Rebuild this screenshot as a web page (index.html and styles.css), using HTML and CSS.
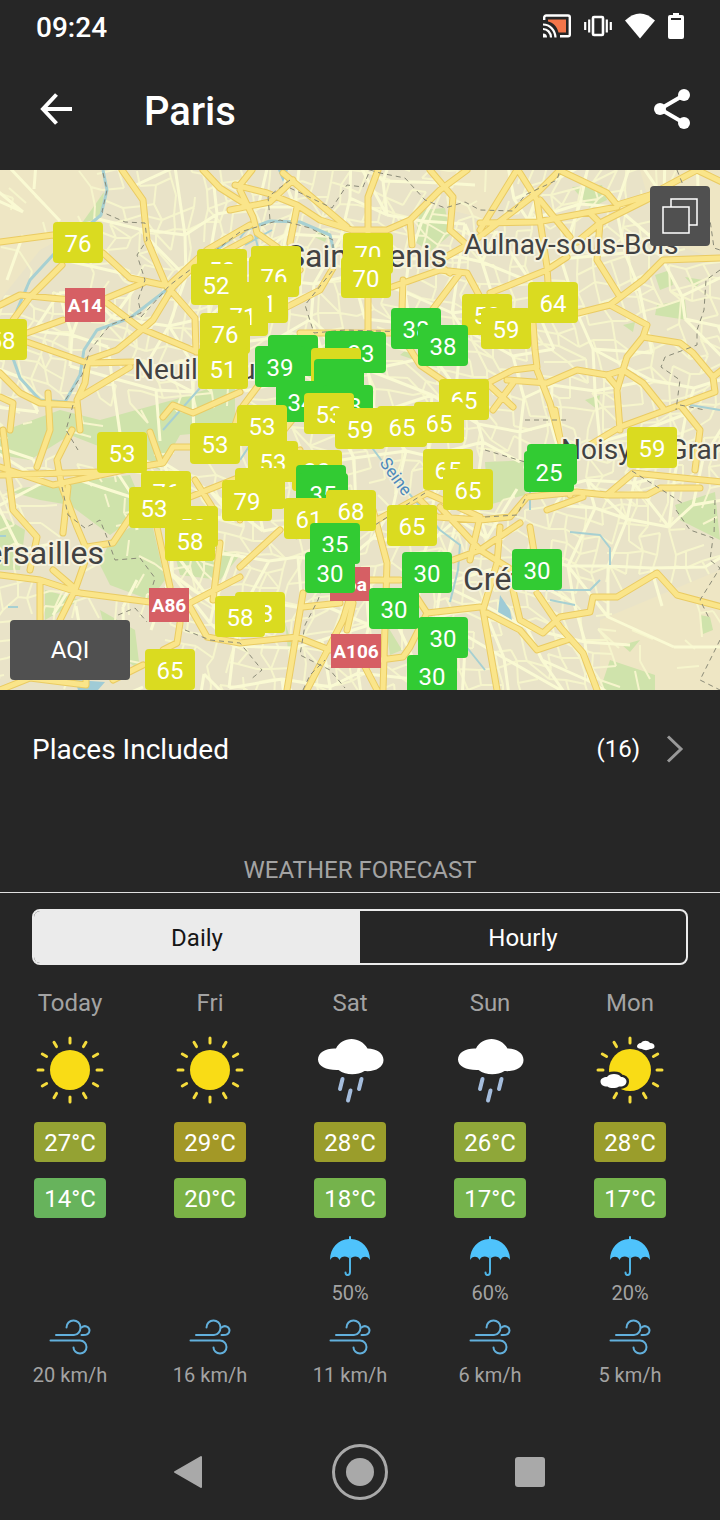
FILE: index.html
```html
<!DOCTYPE html>
<html lang="en">
<head>
<meta charset="utf-8">
<meta name="viewport" content="width=device-width, initial-scale=1">
<title>Paris</title>
<link rel="stylesheet" href="styles.css">
</head>
<body>
<svg width="0" height="0" class="sprites" aria-hidden="true">
  <defs>
    <g id="rays" stroke="#f5dc3c" stroke-width="3" stroke-linecap="round">
      <path id="ray" d="M40 8v5"/>
      <use href="#ray" transform="rotate(30 40 40)"/><use href="#ray" transform="rotate(60 40 40)"/><use href="#ray" transform="rotate(90 40 40)"/><use href="#ray" transform="rotate(120 40 40)"/><use href="#ray" transform="rotate(150 40 40)"/><use href="#ray" transform="rotate(180 40 40)"/><use href="#ray" transform="rotate(210 40 40)"/><use href="#ray" transform="rotate(240 40 40)"/><use href="#ray" transform="rotate(270 40 40)"/><use href="#ray" transform="rotate(300 40 40)"/><use href="#ray" transform="rotate(330 40 40)"/>
    </g>
    <symbol id="sun" viewBox="0 0 80 80"><use href="#rays"/><circle cx="40" cy="40" r="20" fill="#f9dc16"/></symbol>
    <symbol id="rain" viewBox="0 0 80 80">
      <path fill="#fff" d="M26 18.500C29 12.500 35 9 41.500 9S54 12.500 57.500 18.500C67 18.500 73.500 23.500 73.500 30C73.500 37.500 65 42 54.500 41C47 45.500 36 45.500 28.500 40C17 40.500 8 36.500 8 29.500C8 22.500 16 18 26 18.500Z"/>
      <path stroke="#a5bddd" stroke-width="4" stroke-linecap="round" d="M32.500 49l-2.500 10M51.500 49l-2.500 10M40.500 60.500l-2.500 10"/>
    </symbol>
    <symbol id="partly" viewBox="0 0 80 80">
      <g stroke="#f5dc3c" stroke-width="3" stroke-linecap="round"><use href="#ray"/><use href="#ray" transform="rotate(60 40 40)"/><use href="#ray" transform="rotate(90 40 40)"/><use href="#ray" transform="rotate(120 40 40)"/><use href="#ray" transform="rotate(150 40 40)"/><use href="#ray" transform="rotate(180 40 40)"/><use href="#ray" transform="rotate(210 40 40)"/><use href="#ray" transform="rotate(270 40 40)"/><use href="#ray" transform="rotate(300 40 40)"/><use href="#ray" transform="rotate(330 40 40)"/></g>
      <circle cx="40" cy="40" r="21" fill="#f9dc16"/>
      <path fill="#fff" stroke="#262626" stroke-width="5" paint-order="stroke" d="M17 47C19 43 29 43 31 47C34 47 36.500 49 36.500 51.500C36.500 55 33 57 29 56.500C26 58.500 20 58.500 17.500 56.500C13 56.500 10.500 54.500 10.500 51.500S13.500 47 17 47Z"/>
      <path fill="#fff" d="M51 13C53 10 58 10 60 13C63 13 64.500 14.500 64.500 16.500S62 19 60 19C58 20.500 54 20.500 52 19C49 19 47 18 47 16.500S48.500 13 51 13Z"/>
    </symbol>
    <symbol id="umbrella" viewBox="0 0 40 40">
      <path fill="#4fc3fc" d="M19 3V1a1 1 0 0 1 2 0v2C32 3.500 40 12 40 24C38 19.500 32 19.500 30.500 24C29 19.500 22.500 19.500 20 23C17.500 19.500 11 19.500 9.500 24C8 19.500 2 19.500 0 24C0 12 8 3.500 19 3Z"/>
      <path fill="none" stroke="#4fb4e6" stroke-width="2" stroke-linecap="round" d="M20 21v15c0 4-4.500 4-4.500 0.500"/>
    </symbol>
    <symbol id="wind" viewBox="0 0 42 38">
      <g fill="none" stroke="#62b0dc" stroke-width="2" stroke-linecap="round"><path d="M7 17H25C29 17 31.500 13 31.500 9.500C31.500 5 28 2.500 24.500 2.500C20.500 2.500 17.500 5.500 17.500 9.500"/><path d="M32.500 9.500C36 6.500 40.500 9 40.500 12.500C40.500 15.500 38 17.500 32.500 17"/><path d="M1.500 22.500H31C35 22.500 37.500 26 37.500 29C37.500 33 34.500 35.500 31 35.500C27.500 35.500 24.500 33 24.500 29.500"/></g>
    </symbol>
  </defs>
</svg>

<div class="app">
  <div class="status">
    <span class="clock">09:24</span>
    <div class="status-icons">
      <svg width="28" height="24" viewBox="0 0 28 24"><path fill="none" stroke="#fff" stroke-width="2.400" d="M1.200 6V3.500a2 2 0 0 1 2-2H25a1.800 1.800 0 0 1 1.800 1.800V20.500a1.800 1.800 0 0 1-1.800 1.800H17"/><path fill="#f4764a" d="M5 5.500H23V18.500H15.500C14 12 10 8.500 5 7.500Z"/><path fill="none" stroke="#fff" stroke-width="2.200" d="M0 10.500c7 0 12 5.500 12.500 13M0 15c4.500 0 7.800 3.500 8 8.500"/><path fill="#fff" d="M0 19.500q4 0 4 4H0z"/></svg>
      <svg width="28" height="22" viewBox="0 0 28 22"><rect x="9" y="2" width="10" height="18" rx="1" fill="none" stroke="#fff" stroke-width="2.600"/><path stroke="#fff" stroke-width="2.200" d="M1.200 7v8M5.200 4.500v13M22.800 4.500v13M26.800 7v8"/></svg>
      <svg width="30" height="26" viewBox="0 0 30 26"><path fill="#fff" d="M0 7.500Q15-6.500 30 7.500L15 25.500Z"/></svg>
      <svg width="16" height="26" viewBox="0 0 16 26"><path fill="#fff" d="M5 0h6v2h3q2 0 2 2v20q0 2-2 2H2q-2 0-2-2V4q0-2 2-2h3z"/><path fill="#262626" d="M3 5h10v2H3z"/></svg>
    </div>
  </div>

  <header class="bar">
    <button class="icon-btn" aria-label="Back"><svg width="34" height="32" viewBox="0 0 34 32"><path fill="none" stroke="#fff" stroke-width="4" d="M32 16H4M16.500 1.500L3 16l13.500 14.500"/></svg></button>
    <h1>Paris</h1>
    <button class="icon-btn" aria-label="Share"><svg width="36" height="40" viewBox="0 0 36 40"><path fill="none" stroke="#fff" stroke-width="4" d="M30 6L6 20l24 14"/><g fill="#fff"><circle cx="30" cy="6" r="6"/><circle cx="6" cy="20" r="6"/><circle cx="30" cy="34" r="6"/></g></svg></button>
  </header>

  <section class="map" aria-label="Air quality map">
    <svg class="map-canvas" viewBox="0 0 720 520" preserveAspectRatio="xMidYMid slice">
      <defs>
        <path id="roads" d="M0 72L53 65L103 83L130 108L163 115M122 0L143 30L147 70L166 115L195 148L196 182M250 55L207 80L167 117M250 68L190 100L173 117L153 150L133 167L117 180L88 190L85 213L77 230L80 260M0 135L20 125L50 128L107 133L140 158L197 182M62 95L30 127L13 150M27 163L63 150M107 128L143 113M27 172L87 193L133 192M80 227L130 197M0 203L20 223L40 233L73 235M48 223L50 260L37 297M0 227L13 233L10 260M163 247L173 235L193 243L240 222M203 0L220 18L250 37M235 15L267 23L297 35L320 50L352 60L387 60L410 50L440 20L467 0M283 3L347 57M378 0L368 27L368 163M230 40L270 32L293 10M240 20L253 47L257 63L277 77L300 100M240 15L252 0M297 37L290 73M410 50L412 75M430 0L453 27L450 60L467 75L440 90M392 117L440 100L467 103L480 127M403 110L402 140M460 103L427 147M430 90L450 103M287 137L320 120L333 98M300 163H400L420 195L445 212M517 0L480 60M560 0L537 23L478 68M518 0L537 30L547 97L548 113M563 2L607 23L617 35L650 25L697 0L722 12M480 53L537 52L617 37M650 28L600 53L597 90L620 127M540 30L570 67M590 43L600 53L577 72M578 143L610 135L643 110L663 90L720 88M490 123L547 100L567 87M610 135L647 155L643 167L627 187L623 200L617 220L620 260M643 167L680 173L693 183L713 207L715 222L680 235L620 257L590 275M480 217L513 200L537 197L535 180L533 153M537 200L550 233L560 270M507 210L547 213L577 200L607 205L623 200L643 213L663 238M607 205L617 217M487 213L513 237M513 213L493 240M713 207L722 200M680 235L700 260L695 300M0 297L53 315L133 298L163 293L173 277L200 277M0 305L100 302M72 260L57 290L62 317L77 357L88 383L75 420L60 450M3 260L13 340L37 367L30 400M68 317L63 363M0 405L40 410L80 423L150 432M40 413L40 450M53 400L73 417M150 262L160 290M157 357L170 417M87 377L113 373L133 343M190 433L240 407M190 437L207 467L240 473L297 467L330 480M180 453L177 473L163 480L165 520M213 430L220 373M113 510L143 495M190 327L240 307L300 280M0 520L30 508L86 515V470M195 310L214 340M240 397L280 360M303 423L287 520M350 427L343 450L307 520M303 437L340 433M353 433L347 460M373 340L387 393L383 520M377 350L427 323L480 347M420 330L437 347L480 350L510 347L527 327L577 322L607 325L633 303L722 312M370 410H400M380 490L403 487L410 477L427 443L480 437M410 417L427 443M363 493L377 520M440 337L480 380L512 400M453 390L480 380L520 353M607 325L647 325L660 318L700 318M547 340L583 327M555 240L570 325M530 357L537 400M500 357L497 393L483 440L497 520M487 443L520 460L537 480L567 470M513 420L520 450L543 463L560 447L590 442L593 427L617 427L657 403L677 425L722 437M537 423L560 457L583 483L597 520M270 200L240 240L230 270L200 277M300 240L260 290L240 350M480 347L470 390M420 270L450 240L470 217M0 165L15 150"/>
      </defs>
      <rect width="720" height="520" fill="#e9e3c8"/>
      <path fill="#eee6c4" d="M0 0H105L95 50L40 80L0 130ZM640 0H720V90L660 70ZM600 450L720 400V520H600ZM440 0H520L490 50L450 40Z"/>
      <g fill="#cfe3ab">
        <path d="M104 22L101 48L82 53Z"/><path d="M0 262L60 240L100 250L180 228L235 210V260L180 265L160 300L70 265L30 290L0 285Z"/><path d="M5 320L130 305L145 340L110 365L70 335L40 330Z"/><path d="M110 370L150 345L165 410L150 430L110 415L100 395Z"/><path d="M170 365L240 385L220 410L180 405Z"/><path d="M0 345L25 360L20 400H0ZM45 420L80 430L45 450ZM100 440L135 460L140 500L110 480Z"/><path d="M420 40L445 38L450 65L430 82L415 72Z"/><path d="M572 17L602 15L607 30L590 38Z"/><path d="M655 105L670 100L673 115L660 120ZM685 107L703 110L695 118ZM657 135L685 130L687 150L655 145ZM623 155L635 152L633 162Z"/><path d="M485 292L530 290L525 325L488 335Z"/><path d="M675 335L715 322L720 370L680 350Z"/><path d="M600 520L610 490L655 505V520ZM700 445L710 447L713 460L703 464ZM622 475L640 470L630 482Z"/><path d="M385 452L402 480L390 485ZM285 452L292 475L288 480ZM288 365L302 352L297 370ZM400 185L412 175L415 190ZM585 230L600 225L598 240ZM310 65L330 60L325 72Z"/>
      </g>
      <g id="streets"></g>
      <g class="river">
        <path d="M103 0L107 20L101 45L53 85L30 110L17 140L10 180L20 208L40 230L65 232L80 205L84 180L97 160L130 148L160 125L190 100L240 62L270 51L300 52L330 65L336 90"/>
        <path class="stream" d="M240 68L250 55M245 75L272 60M255 65L258 78M163 260L185 235L200 218M240 290L250 275L255 250M370 275L385 295L440 360L460 375L458 400L450 432M530 320V340M570 362L600 365L610 378V395M540 420L590 420L600 410M550 430L575 435M465 475L485 500M0 366H6M8 437H18M720 240L690 235"/>
      </g>
      <path fill="#9fcbd6" d="M500 425L510 440L512 450L498 442ZM278 0H288L283 12ZM75 510L105 512L98 520H78Z"/>
      <use href="#roads" class="road-edge"/>
      <use href="#roads" class="road"/>
      <path class="border" d="M103 3L107 20L102 42L125 52L145 53L147 70L137 85L145 110L138 130L141 143L110 155L90 180L82 205L64 232M141 147L170 115L240 62L280 50L310 58L333 70V100L305 135L314 163L345 160L440 163M290 10L268 27L270 50M290 18L332 38L347 15L363 17L370 0L380 3L405 8L425 30L445 38L465 32L480 40L513 41L525 25L557 10L560 0M677 0L685 20L710 50L714 78L720 80M720 100L706 110L704 140L697 160L697 175L665 187L661 197L680 210L676 240M73 235L66 260L78 280M62 317L68 345L85 358L100 350L108 370L115 390L140 388L155 408L150 425L165 418M118 445L135 438L147 452M185 460L210 470L240 473L262 500L250 510M325 410L318 430L305 455L300 485L330 500L345 518M303 520L310 505L325 490M425 323L375 355M485 347L517 345L527 325M485 280L525 292M525 250H567M632 301L670 325L685 335M676 340L690 360L713 368L710 390L720 398L700 430L710 450M715 330L714 365M720 470L700 510L720 520M680 235L705 240"/>
      <g class="city">
        <text x="286" y="97" class="lg">Saint-Denis</text>
        <text x="464" y="84">Aulnay-sous-Bois</text>
        <text x="134" y="209">Neuilly-sur</text>
        <text x="104" y="394" class="lg end">Versailles</text>
        <text x="463" y="420" class="lg">Créteil</text>
        <text x="561" y="289">Noisy-le-Grand</text>
      </g>
      <text class="water" transform="translate(379 293) rotate(54)">Seine</text>
      <g class="shield">
        <rect x="65" y="118" width="40" height="34"/><text x="85" y="142">A14</text>
        <rect x="149" y="418" width="40" height="34"/><text x="169" y="442">A86</text>
        <rect x="330" y="397" width="40" height="34"/><text x="350" y="421">A6a</text>
        <rect x="331" y="464" width="50" height="34"/><text x="356" y="488">A106</text>
      </g>
      <g id="pins"></g>
    </svg>
    <button class="layers" aria-label="Map layers"><svg width="36" height="36" viewBox="0 0 36 36" fill="#505050" stroke="#fff" stroke-width="1.500"><path d="M9 1H35V27H9Z"/><path d="M1 9H27V35H1Z"/></svg></button>
    <button class="aqi">AQI</button>
  </section>

  <a class="places" href="#places"><span>Places Included</span><span class="count">(16)</span><svg width="18" height="28" viewBox="0 0 18 28"><path fill="none" stroke="#999" stroke-width="3" d="M2 1.500L15 14L2 26.500"/></svg></a>

  <h2>WEATHER FORECAST</h2>
  <div class="tabs" role="tablist">
    <button role="tab" aria-selected="true">Daily</button>
    <button role="tab" aria-selected="false">Hourly</button>
  </div>

  <div class="days">
    <article class="day"><h3>Today</h3><svg class="sky"><use href="#sun"/></svg><span class="temp t27">27°C</span><span class="temp t14">14°C</span><div class="wet"></div><svg class="wind"><use href="#wind"/></svg><span class="note">20 km/h</span></article>
    <article class="day"><h3>Fri</h3><svg class="sky"><use href="#sun"/></svg><span class="temp t29">29°C</span><span class="temp t20">20°C</span><div class="wet"></div><svg class="wind"><use href="#wind"/></svg><span class="note">16 km/h</span></article>
    <article class="day"><h3>Sat</h3><svg class="sky"><use href="#rain"/></svg><span class="temp t28">28°C</span><span class="temp t17">18°C</span><div class="wet"><svg class="umbrella"><use href="#umbrella"/></svg><span class="note">50%</span></div><svg class="wind"><use href="#wind"/></svg><span class="note">11 km/h</span></article>
    <article class="day"><h3>Sun</h3><svg class="sky"><use href="#rain"/></svg><span class="temp t26">26°C</span><span class="temp t17">17°C</span><div class="wet"><svg class="umbrella"><use href="#umbrella"/></svg><span class="note">60%</span></div><svg class="wind"><use href="#wind"/></svg><span class="note">6 km/h</span></article>
    <article class="day"><h3>Mon</h3><svg class="sky"><use href="#partly"/></svg><span class="temp t28">28°C</span><span class="temp t17">17°C</span><div class="wet"><svg class="umbrella"><use href="#umbrella"/></svg><span class="note">20%</span></div><svg class="wind"><use href="#wind"/></svg><span class="note">5 km/h</span></article>
  </div>

  <nav class="system">
    <button aria-label="Back"><svg width="56" height="56" viewBox="0 0 56 56"><path fill="#a9a9a9" stroke="#a9a9a9" stroke-width="2" stroke-linejoin="round" d="M39 13V43L13 28Z"/></svg></button>
    <button aria-label="Home"><svg width="56" height="56" viewBox="0 0 56 56"><circle cx="28" cy="28" r="26.500" fill="none" stroke="#a9a9a9" stroke-width="3"/><circle cx="28" cy="28" r="14" fill="#a9a9a9"/></svg></button>
    <button aria-label="Recent apps"><svg width="56" height="56" viewBox="0 0 56 56"><rect x="13" y="13" width="30" height="30" rx="3" fill="#a9a9a9"/></svg></button>
  </nav>
</div>
<script src="map.js"></script>
</body>
</html>
```

FILE: styles.css
```css
* { box-sizing: border-box; }
body {
  margin: 0;
  background: #262626;
  color: #fff;
  font-family: Roboto, "Noto Sans", sans-serif;
  font-size: 24px;
}
button {
  border: 0;
  padding: 0;
  background: none;
  color: inherit;
  font: inherit;
  cursor: pointer;
}
svg { display: block; }
.sprites { position: absolute; }
.app {
  display: flex;
  flex-direction: column;
  min-height: 100vh;
}

.status {
  display: flex;
  align-items: center;
  justify-content: space-between;
  height: 52px;
  padding: 0 36px;
}
.clock { padding-top: 2px; font-size: 28px; font-weight: 500; }
.status-icons { display: flex; align-items: center; gap: 13px; }

.bar {
  display: flex;
  align-items: center;
  height: 118px;
  padding: 0 30px 4px 40px;
}
.bar h1 {
  flex: 1;
  margin: 6px 0 0 70px;
  font-size: 40px;
  font-weight: 500;
  line-height: 48px;
}

.map { position: relative; overflow: hidden; }
.map-canvas { width: 100%; height: auto; }
.streets { fill: none; stroke: #f6f5cc; stroke-width: 2; stroke-linejoin: round; }
.streets-light { stroke: #fafad3; stroke-width: 3; }
.river { fill: none; stroke: #a7d0d2; stroke-width: 3; stroke-linejoin: round; }
.stream { stroke-width: 2; }
.road-edge, .road { fill: none; stroke-linecap: round; stroke-linejoin: round; }
.road-edge { stroke: #eacb62; stroke-width: 7; }
.road { stroke: #fae58a; stroke-width: 5; }
.border { fill: none; stroke: #8a8a78; stroke-width: 1; stroke-dasharray: 5 4; }
.city text {
  fill: #424242;
  stroke: #f6f3df;
  stroke-width: 4px;
  stroke-linejoin: round;
  paint-order: stroke;
  font-size: 28px;
}
.city .lg { font-size: 32px; }
.city .end { text-anchor: end; }
.water { fill: #4c88bb; stroke: #f1efd8; stroke-width: 3px; paint-order: stroke; font-size: 17px; }
.shield rect { fill: #d65f64; }
.shield text { fill: #fff; font-size: 19px; font-weight: 700; text-anchor: middle; }
.pin rect { fill: #dadb20; }
.pin.good rect { fill: #32cb33; }
.pin text { fill: #fff; font-size: 24px; text-anchor: middle; }
.layers, .aqi {
  position: absolute;
  height: 60px;
  border-radius: 4px;
  background: #505050;
}
.layers { top: 16px; right: 10px; width: 60px; padding: 12px; }
.aqi { bottom: 10px; left: 10px; width: 120px; }

.places {
  display: flex;
  align-items: center;
  height: 118px;
  padding: 0 36px 0 32px;
  color: #fff;
  font-size: 28px;
  text-decoration: none;
}
.count { margin: 0 26px 0 auto; font-size: 24px; }

h2 {
  margin: 44px 0 16px;
  border-bottom: 1px solid #e0e0e0;
  color: #a3a3a3;
  font-size: 24px;
  font-weight: 400;
  line-height: 36px;
  padding-bottom: 4px;
  text-align: center;
}
.tabs {
  display: grid;
  grid-template-columns: 1fr 1fr;
  height: 56px;
  margin: 0 32px;
  border: 2px solid #ebebeb;
  border-radius: 8px;
  overflow: hidden;
}
.tabs button { padding-top: 2px; }
.tabs [aria-selected="true"] { background: #ebebeb; color: #161616; }

.days {
  display: grid;
  grid-template-columns: repeat(5, 1fr);
  padding: 20px 20px 0 0;
}
.day { display: flex; flex-direction: column; align-items: center; }
.day h3 { margin: 0; color: #a3a3a3; font-size: 24px; font-weight: 400; line-height: 36px; }
.sky { width: 80px; height: 80px; margin: 9px 0 12px; }
.temp {
  width: 72px;
  height: 40px;
  margin-bottom: 16px;
  border-radius: 4px;
  line-height: 42px;
  text-align: center;
}
.t14 { background: #67b35c; }
.t17 { background: #75b34c; }
.t20 { background: #7bb246; }
.t26 { background: #8fa739; }
.t27 { background: #94a233; }
.t28 { background: #9a9d2b; }
.t29 { background: #a39826; }
.wet {
  display: flex;
  flex-direction: column;
  align-items: center;
  height: 84px;
  padding-top: 2px;
}
.umbrella { width: 40px; height: 40px; margin-bottom: 4px; }
.wind { width: 42px; height: 38px; margin-bottom: 6px; }
.note { color: #a3a3a3; font-size: 20px; line-height: 26px; }

.system {
  display: flex;
  justify-content: center;
  gap: 114px;
  margin-top: auto;
  padding-bottom: 20px;
}
```

FILE: map.js
```js
const NS = "http://www.w3.org/2000/svg";

function add(parent, tag, attrs, text) {
  const node = document.createElementNS(NS, tag);
  for (const key in attrs) node.setAttribute(key, attrs[key]);
  if (text) node.textContent = text;
  parent.appendChild(node);
  return node;
}

let seed = 41;
function rand() {
  seed = (seed * 16807) % 2147483647;
  return seed / 2147483647;
}

// Side streets: a jittered mesh with some links left out.
function mesh(step, jitter, keep, openLand) {
  const cols = Math.ceil(720 / step) + 3;
  const rows = Math.ceil(520 / step) + 3;
  const points = [];
  for (let r = 0; r < rows; r++) {
    points.push([]);
    for (let c = 0; c < cols; c++) {
      const x = (c - 1) * step, y = (r - 1) * step;
      const dx = Math.sin(y / 53 + x / 170) * 16 + (rand() - 0.5) * jitter;
      const dy = Math.sin(x / 61 - y / 140) * 18 + (rand() - 0.5) * jitter;
      points[r].push([Math.round(x + dx), Math.round(y + dy)]);
    }
  }
  let d = "";
  const link = (a, b) => {
    if (openLand.some(([x, y, w, h]) => a[0] > x && a[0] < x + w && a[1] > y && a[1] < y + h) && rand() < 0.85) return;
    d += `M${a}L${b}`;
  };
  for (let r = 0; r < rows - 1; r++) {
    for (let c = 0; c < cols - 1; c++) {
      if (rand() < keep) link(points[r][c], points[r][c + 1]);
      if (rand() < keep) link(points[r][c], points[r + 1][c]);
      if (rand() < 0.14) link(points[r][c], points[r + 1][c + 1]);
    }
  }
  return d;
}

const openLand = [
  [-20, -20, 110, 140], [600, 400, 140, 140], [680, -20, 60, 100],
  [0, 230, 240, 60], [20, 310, 150, 110], [0, 440, 160, 90],
  [675, 320, 60, 60], [450, -20, 60, 60], [485, 290, 45, 40]
];
const streets = document.getElementById("streets");
add(streets, "path", { class: "streets", d: mesh(16, 9, 0.7, openLand) });
add(streets, "path", { class: "streets streets-light", d: mesh(42, 26, 0.75, openLand) });

// Air quality readings: x, y, value, and the level where the value alone
// does not give it. A value of 0 draws the pin without a number.
const readings = [
  [53, 52, 76], [-23, 149, 58], [197, 79, 52], [191, 94, 52], [251, 76, 0, "moderate"], [249, 86, 76], [238, 112, 71], [218, 125, 71],
  [200, 143, 76], [198, 178, 51], [343, 63, 70], [341, 87, 70], [528, 112, 64], [462, 124, 52], [481, 138, 59],
  [391, 138, 38], [418, 155, 38], [325, 161, 0, "good"], [336, 162, 33], [268, 165, 0, "good"], [255, 176, 39], [311, 178, 0, "moderate"],
  [276, 211, 34], [314, 189, 0, "good"], [323, 215, 38], [304, 223, 53], [439, 209, 65], [414, 232, 65], [377, 236, 65], [335, 238, 59],
  [237, 235, 53], [190, 253, 53], [97, 262, 53], [141, 301, 76], [129, 317, 53], [168, 336, 58], [165, 350, 58],
  [248, 271, 53], [235, 298, 0, "moderate"], [222, 310, 79], [292, 280, 30, "moderate"], [296, 295, 0, "good"], [298, 303, 35],
  [326, 320, 68], [284, 328, 61], [310, 353, 35], [305, 382, 30], [387, 335, 65], [423, 279, 65], [443, 299, 65],
  [402, 382, 30], [369, 418, 30], [418, 447, 30], [407, 485, 30], [235, 422, 53], [215, 426, 58], [145, 479, 65],
  [527, 274, 0, "good"], [524, 281, 25], [627, 257, 59], [512, 379, 30]
];
const pins = document.getElementById("pins");
for (const [x, y, value, level = value < 50 ? "good" : "moderate"] of readings) {
  const pin = add(pins, "g", { class: `pin ${level}`, transform: `translate(${x} ${y})` });
  add(pin, "rect", { width: 50, height: 41, rx: 4 });
  if (value) add(pin, "text", { x: 25, y: 30 }, String(value));
}
```
